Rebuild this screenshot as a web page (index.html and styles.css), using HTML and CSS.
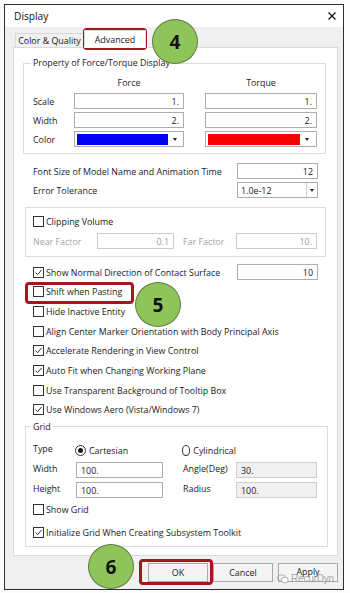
FILE: index.html
```html
<!DOCTYPE html>
<html>
<head>
<meta charset="utf-8">
<title>Display</title>
<link rel="stylesheet" href="styles.css">
</head>
<body>
<div class="window">
  <div class="titlebar">
    <span class="title">Display</span>
    <svg class="close" width="8" height="8" viewBox="0 0 8 8"><path d="M0.5 0.5 L7.5 7.5 M7.5 0.5 L0.5 7.5" stroke="#111" stroke-width="1.2" fill="none"/></svg>
  </div>
  <div class="client">
    <div class="tabs">
      <div class="tab tab-color">Color &amp; Quality</div>
      <div class="tab tab-adv active">Advanced</div>
    </div>
    <div class="panel">
      <fieldset class="group g-prop">
        <legend>Property of Force/Torque Display</legend>
        <div class="prop-grid">
          <span></span><span class="hdr">Force</span><span class="hdr">Torque</span>
          <span class="lbl">Scale</span><span class="input">1.</span><span class="input">1.</span>
          <span class="lbl">Width</span><span class="input">2.</span><span class="input">2.</span>
          <span class="lbl">Color</span>
          <span class="combo"><span class="swatch blue"></span><span class="arrow"></span></span>
          <span class="combo"><span class="swatch red"></span><span class="arrow"></span></span>
        </div>
      </fieldset>

      <div class="row r-font">
        <span class="lbl">Font Size of Model Name and Animation Time</span>
        <span class="input w81">12</span>
      </div>
      <div class="row r-tol">
        <span class="lbl">Error Tolerance</span>
        <span class="select w81"><span class="sel-text">1.0e-12</span><span class="sel-btn"><span class="arrow"></span></span></span>
      </div>

      <div class="box clip">
        <div class="check"><span class="cb"></span><span>Clipping Volume</span></div>
        <div class="near-row">
          <span class="dis">Near Factor</span>
          <span class="input dis">0.1</span>
          <span class="dis">Far Factor</span>
          <span class="input dis">10.</span>
        </div>
      </div>

      <div class="row r-normal">
        <div class="check"><span class="cb on"><svg width="9" height="9" viewBox="0 0 9 9"><path d="M1.5 4.5 L3.6 6.7 L7.6 1.9" stroke="#333" stroke-width="1" fill="none"/></svg></span><span>Show Normal Direction of Contact Surface</span></div>
        <span class="input w81">10</span>
      </div>

      <div class="checks">
        <div class="check"><span class="cb"></span><span>Shift when Pasting</span></div>
        <div class="check"><span class="cb"></span><span>Hide Inactive Entity</span></div>
        <div class="check"><span class="cb"></span><span>Align Center Marker Orientation with Body Principal Axis</span></div>
        <div class="check"><span class="cb on"><svg width="9" height="9" viewBox="0 0 9 9"><path d="M1.5 4.5 L3.6 6.7 L7.6 1.9" stroke="#333" stroke-width="1" fill="none"/></svg></span><span>Accelerate Rendering in View Control</span></div>
        <div class="check"><span class="cb on"><svg width="9" height="9" viewBox="0 0 9 9"><path d="M1.5 4.5 L3.6 6.7 L7.6 1.9" stroke="#333" stroke-width="1" fill="none"/></svg></span><span>Auto Fit when Changing Working Plane</span></div>
        <div class="check"><span class="cb"></span><span>Use Transparent Background of Tooltip Box</span></div>
        <div class="check"><span class="cb on"><svg width="9" height="9" viewBox="0 0 9 9"><path d="M1.5 4.5 L3.6 6.7 L7.6 1.9" stroke="#333" stroke-width="1" fill="none"/></svg></span><span>Use Windows Aero (Vista/Windows 7)</span></div>
      </div>

      <fieldset class="group g-grid">
        <legend>Grid</legend>
        <div class="grid-grid">
          <span class="lbl">Type</span>
          <span class="radio-item"><span class="rb on"></span><span>Cartesian</span></span>
          <span></span>
          <span class="radio-item"><span class="rb"></span><span>Cylindrical</span></span>
          <span></span>

          <span class="lbl">Width</span>
          <span class="input left">100.</span>
          <span></span>
          <span class="lbl">Angle(Deg)</span>
          <span class="input left ro">30.</span>

          <span class="lbl">Height</span>
          <span class="input left">100.</span>
          <span></span>
          <span class="lbl">Radius</span>
          <span class="input left ro">100.</span>
        </div>
        <div class="check c-show"><span class="cb"></span><span>Show Grid</span></div>
        <div class="check c-init"><span class="cb on"><svg width="9" height="9" viewBox="0 0 9 9"><path d="M1.5 4.5 L3.6 6.7 L7.6 1.9" stroke="#333" stroke-width="1" fill="none"/></svg></span><span>Initialize Grid When Creating Subsystem Toolkit</span></div>
      </fieldset>
    </div>
    <div class="buttons">
      <span class="btn">OK</span>
      <span class="btn">Cancel</span>
      <span class="btn btn-apply">Apply</span>
    </div>
  </div>
</div>

<div class="mark mark-adv"></div>
<div class="mark mark-shift"></div>
<div class="mark mark-ok"></div>
<div class="badge b4">4</div>
<div class="badge b5">5</div>
<div class="badge b6">6</div>
<div class="watermark">
  <svg width="12" height="10" viewBox="0 0 12 10"><ellipse cx="4.5" cy="4" rx="4" ry="3.2" fill="none" stroke="#9a9a9a" stroke-width="0.8"/><ellipse cx="7.8" cy="6" rx="3.4" ry="2.8" fill="#fff" stroke="#9a9a9a" stroke-width="0.8"/></svg>
  <span>RecurDyn</span>
</div>
</body>
</html>
```
FILE: styles.css
```css
* { box-sizing: border-box; }
html, body { margin: 0; }
body {
  width: 350px;
  height: 593px;
  padding: 4px 0 0 4px;
  background: #fcfcfc;
  position: relative;
  overflow: hidden;
  font-family: "Open Sans", "Noto Sans", sans-serif;
  font-size: 8.9px;
  color: #1a1a1a;
}
.window {
  width: 340px;
  height: 586px;
  border: 1px solid #2e2e2e;
  background: #f0f0f0;
  display: flex;
  flex-direction: column;
}
.titlebar {
  height: 22px;
  flex: 0 0 22px;
  background: #fff;
  display: flex;
  align-items: center;
  justify-content: space-between;
  padding: 0 7px 0 9px;
}
.title { font-size: 10.2px; color: #111; }
.close { display: block; }
.client {
  flex: 1;
  display: flex;
  flex-direction: column;
  padding: 4px 5px 0 8px;
}
.tabs {
  height: 16px;
  display: flex;
  align-items: flex-end;
  padding-left: 2px;
}
.tab {
  height: 14px;
  border: 1px solid #d9d9d9;
  border-bottom: 0;
  background: #f0f0f0;
  display: flex;
  align-items: center;
  justify-content: center;
  white-space: nowrap;
}
.tab-color { width: 69px; }
.tab-adv { width: 62px; }
.tab.active {
  height: 18px;
  margin-bottom: -1px;
  background: #fff;
  position: relative;
  z-index: 1;
}
.panel {
  height: 509px;
  flex: 0 0 509px;
  border: 1px solid #d9d9d9;
  background: #fff;
  display: flex;
  flex-direction: column;
}
fieldset.group {
  margin: 0;
  padding: 0;
  min-width: 0;
  border: 1px solid #dcdcdc;
}
fieldset.group legend {
  padding: 0 2px;
  margin-left: -2px;
  line-height: 12px;
  height: 12px;
}
.g-prop {
  margin: 9px 11px 0 9px !important;
  padding: 5px 0 6px 9px !important;
}
.prop-grid {
  display: grid;
  grid-template-columns: 41px 110px 133px;
  grid-template-rows: repeat(4, 16px);
  row-gap: 3px;
  align-items: center;
}
.prop-grid > :nth-child(3n) { margin-left: 21px; }
.hdr { text-align: center; }
.input {
  height: 16px;
  border: 1px solid #adadad;
  background: #fff;
  display: flex;
  align-items: center;
  justify-content: flex-end;
  padding-right: 4px;
}
.input.left { justify-content: flex-start; padding: 2px 0 0 4px; }
.input.ro { background: #f0f0f0; border-color: #cfcfcf; }
.input.dis { border-color: #cccccc; color: #9a9a9a; }
.dis { color: #a3a3a3; }
.combo {
  height: 16px;
  border: 1px solid #adadad;
  background: #fff;
  display: flex;
  align-items: center;
  padding: 2px;
}
.swatch { height: 11px; width: 91px; }
.swatch.blue { background: #0000f4; }
.swatch.red { background: #f40000; width: 92px; }
.arrow {
  width: 0;
  height: 0;
  border-left: 2.5px solid transparent;
  border-right: 2.5px solid transparent;
  border-top: 3px solid #222;
  margin: 0 auto;
}
.w81 { width: 81px; flex: 0 0 81px; }
.row {
  height: 16px;
  display: flex;
  align-items: center;
  justify-content: space-between;
  padding-left: 19px;
  margin-right: 19px;
}
.r-font { margin-top: 9px; }
.r-tol { margin-top: 3px; }
.select {
  height: 16px;
  border: 1px solid #adadad;
  background: #fff;
  display: flex;
  align-items: stretch;
}
.sel-text { flex: 1; padding-left: 3px; display: flex; align-items: center; }
.sel-btn {
  width: 11px;
  border-left: 1px solid #cfcfcf;
  display: flex;
  align-items: center;
}
.box {
  border: 1px solid #dcdcdc;
}
.clip {
  margin: 9px 11px 0 11px;
  padding: 5px 8px 7px 7px;
}
.check {
  display: flex;
  align-items: center;
  height: 16px;
  white-space: nowrap;
}
.cb {
  width: 11px;
  height: 11px;
  flex: 0 0 11px;
  border: 1px solid #333;
  background: #fff;
  margin-right: 2px;
  display: flex;
  align-items: center;
  justify-content: center;
}
.cb svg { display: block; }
.near-row {
  margin-top: 4px;
  display: grid;
  grid-template-columns: 64px 77px 9px 53px 81px;
  grid-template-rows: 16px;
  align-items: center;
}
.near-row > :nth-child(3) { grid-column: 4; }
.near-row > :nth-child(4) { grid-column: 5; }
.r-normal { margin-top: 7px; }
.checks {
  margin-top: 2px;
  padding-left: 19px;
}
.checks .check { height: 19.7px; }
.g-grid {
  margin: 1px 9px 0 11px !important;
  padding: 9px 0 5px 7px !important;
}
.grid-grid {
  display: grid;
  grid-template-columns: 43px 87px 20px 53px 81px;
  grid-template-rows: repeat(3, 16px);
  row-gap: 4px;
  align-items: center;
}
.grid-grid .lbl { align-self: start; }
.radio-item { display: flex; align-items: center; margin-left: -1px; padding-top: 2px; }
.rb {
  width: 11px;
  height: 11px;
  border: 1px solid #333;
  border-radius: 50%;
  background: #fff;
  margin-right: 3px;
  display: flex;
  align-items: center;
  justify-content: center;
}
.rb.on::after {
  content: "";
  width: 5px;
  height: 5px;
  border-radius: 50%;
  background: #1a1a1a;
}
.c-show { margin-top: 4px; }
.c-init { margin-top: 7px; }
.buttons {
  margin-top: 7px;
  display: flex;
  justify-content: flex-end;
  gap: 5px;
}
.btn {
  width: 60px;
  height: 19px;
  border: 1px solid #a9a9a9;
  background: #f4f4f4;
  display: flex;
  align-items: center;
  justify-content: center;
}
.btn-apply { align-items: flex-start; padding-top: 1px; }
.mark {
  position: absolute;
  border: 3px solid #a3171f;
  border-radius: 4px;
}
.mark-adv { left: 83px; top: 28px; width: 64px; height: 22px; }
.mark-shift { left: 25px; top: 282px; width: 109px; height: 22px; }
.mark-ok { left: 139px; top: 559px; width: 74px; height: 26px; }
.badge {
  position: absolute;
  width: 46px;
  height: 45px;
  border-radius: 50%;
  background: #8fc45a;
  border: 1px solid #5d7c40;
  display: flex;
  align-items: center;
  justify-content: center;
  font-family: "Open Sans", sans-serif;
  font-weight: 700;
  font-size: 19px;
  color: #111;
}
.b4 { left: 152px; top: 19px; }
.b5 { left: 135px; top: 282px; }
.b6 { left: 88px; top: 544px; }
.watermark {
  position: absolute;
  left: 277px;
  top: 573px;
  display: flex;
  align-items: center;
  gap: 2px;
  font-family: "Liberation Sans", sans-serif;
  font-size: 10px;
  line-height: 11px;
  color: rgba(140, 140, 140, 0.75);
  letter-spacing: -0.2px;
}
.watermark svg { display: block; }
```
